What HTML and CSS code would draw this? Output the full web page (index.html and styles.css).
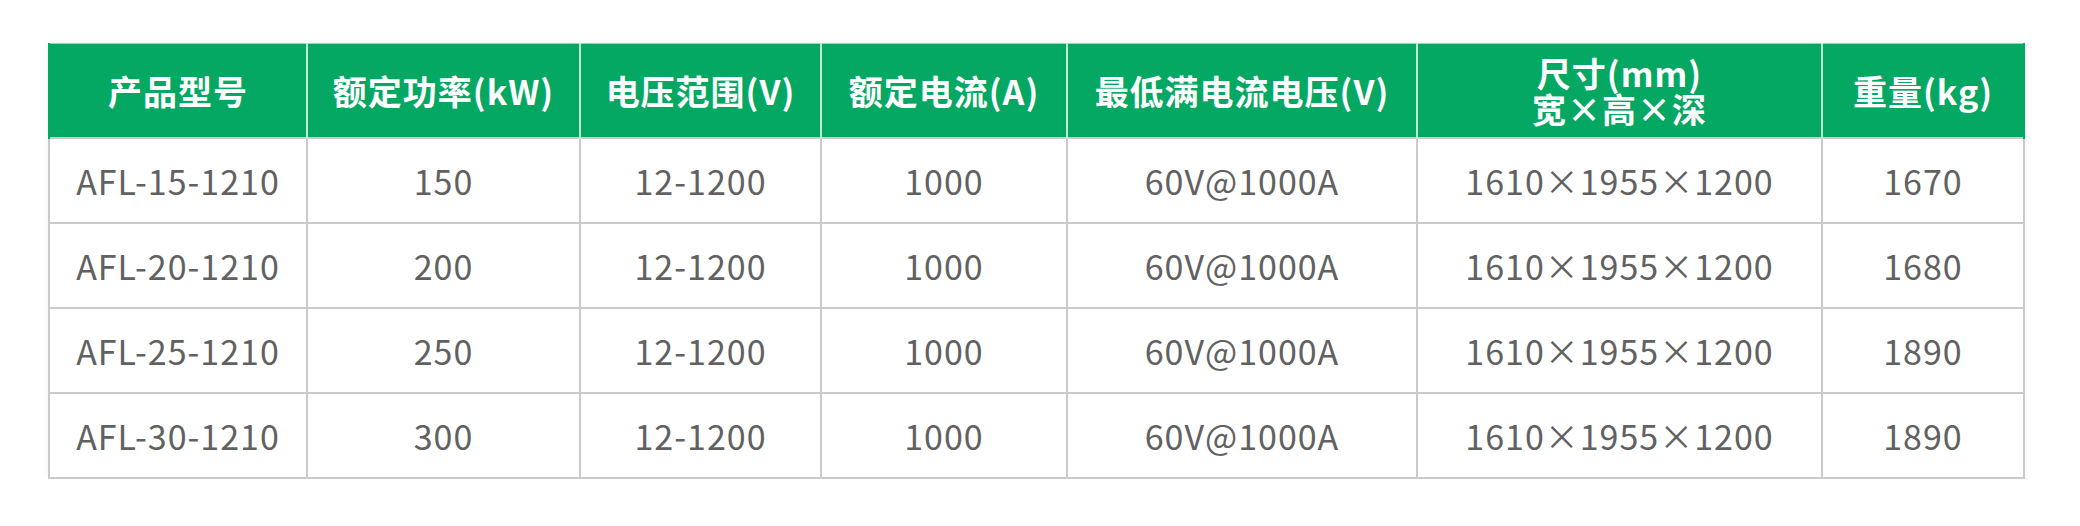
FILE: index.html
```html
<!DOCTYPE html>
<html lang="zh-CN">
<head>
<meta charset="utf-8">
<title>产品参数</title>
<link rel="stylesheet" href="styles.css">
</head>
<body>
<div class="page">
  <table class="spec">
    <colgroup>
      <col class="c1"><col class="c2"><col class="c3"><col class="c4"><col class="c5"><col class="c6"><col class="c7">
    </colgroup>
    <thead>
      <tr>
        <th>产品型号</th>
        <th>额定功率(kW)</th>
        <th>电压范围(V)</th>
        <th>额定电流(A)</th>
        <th>最低满电流电压(V)</th>
        <th class="two">尺寸(mm)<br>宽×高×深</th>
        <th>重量(kg)</th>
      </tr>
    </thead>
    <tbody>
      <tr><td>AFL-15-1210</td><td>150</td><td>12-1200</td><td>1000</td><td>60V@1000A</td><td>1610×1955×1200</td><td>1670</td></tr>
      <tr><td>AFL-20-1210</td><td>200</td><td>12-1200</td><td>1000</td><td>60V@1000A</td><td>1610×1955×1200</td><td>1680</td></tr>
      <tr><td>AFL-25-1210</td><td>250</td><td>12-1200</td><td>1000</td><td>60V@1000A</td><td>1610×1955×1200</td><td>1890</td></tr>
      <tr><td>AFL-30-1210</td><td>300</td><td>12-1200</td><td>1000</td><td>60V@1000A</td><td>1610×1955×1200</td><td>1890</td></tr>
    </tbody>
  </table>
</div>
</body>
</html>
```
FILE: styles.css
```css
html, body {
  margin: 0;
  padding: 0;
  background: #ffffff;
}
.page {
  padding: 43px 0 0 48px;
}
.spec {
  border-collapse: collapse;
  table-layout: fixed;
  width: 1975px;
  font-family: "Noto Sans CJK SC", "Noto Sans", sans-serif;
  box-shadow: 0 0 8px rgba(0, 0, 0, 0.05);
}
.c1 { width: 258px; }
.c2 { width: 273px; }
.c3 { width: 241px; }
.c4 { width: 246px; }
.c5 { width: 350px; }
.c6 { width: 405px; }
.c7 { width: 202px; }

.spec th {
  height: 93px;
  padding: 0;
  background: #05a862;
  color: #ffffff;
  font-size: 34px;
  font-weight: 700;
  letter-spacing: 1px;
  line-height: 36px;
  text-align: center;
  vertical-align: middle;
  border-left: 2px solid #bfead4;
  border-right: 2px solid #bfead4;
  border-top: 1px solid #8ed8b3;
}
.spec th:first-child { border-left: 2px solid #05a862; }
.spec th:last-child { border-right: 2px solid #05a862; }
.spec th.two {
  line-height: 36px;
}
.spec td {
  height: 83px;
  padding: 0;
  border: 2px solid #cacaca;
  color: #616161;
  font-size: 34px;
  font-weight: 400;
  letter-spacing: 1px;
  text-align: center;
  vertical-align: middle;
}
```
